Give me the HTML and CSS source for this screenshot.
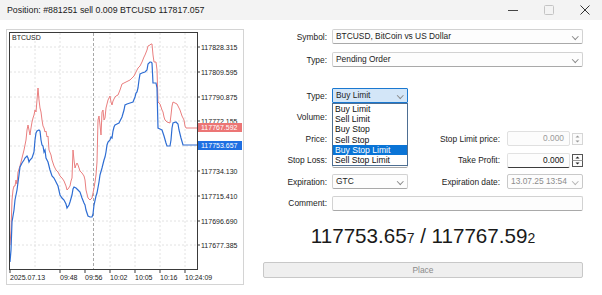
FILE: index.html
```html
<!DOCTYPE html>
<html lang="en">
<head>
  <meta charset="UTF-8" />
  <title>Position</title>
  <link rel="stylesheet" href="styles.css">
</head>
<body>

  <!-- BARRA DE TITULO -->
  <header class="titlebar">
    <span class="title">Position: #881251 sell 0.009 BTCUSD 117817.057</span>
    <div class="controls">
      <svg width="12" height="12" viewBox="0 0 12 12"><line x1="1" y1="6.5" x2="11" y2="6.5" stroke="#444" stroke-width="1"/></svg>
      <svg width="12" height="12" viewBox="0 0 12 12"><rect x="1.5" y="1.5" width="9" height="9" rx="1" fill="none" stroke="#c4c4c4"/></svg>
      <svg width="12" height="12" viewBox="0 0 12 12"><path d="M1.5 1.5 L10.5 10.5 M10.5 1.5 L1.5 10.5" stroke="#333" stroke-width="1"/></svg>
    </div>
  </header>

  <main class="content">

    <!-- GRAFICO -->
    <section class="chart-panel">
      <svg class="chart" width="236" height="254" viewBox="0 0 236 254">
        <g transform="translate(-7 -30)">
          <g class="grid-lines">
            <line x1="10" y1="47" x2="197" y2="47"/>
            <line x1="10" y1="72" x2="197" y2="72"/>
            <line x1="10" y1="97" x2="197" y2="97"/>
            <line x1="10" y1="121" x2="197" y2="121"/>
            <line x1="10" y1="146" x2="197" y2="146"/>
            <line x1="10" y1="171" x2="197" y2="171"/>
            <line x1="10" y1="196" x2="197" y2="196"/>
            <line x1="10" y1="221" x2="197" y2="221"/>
            <line x1="10" y1="245" x2="197" y2="245"/>
            <line x1="35" y1="33" x2="35" y2="269"/>
            <line x1="60" y1="33" x2="60" y2="269"/>
            <line x1="110" y1="33" x2="110" y2="269"/>
            <line x1="135" y1="33" x2="135" y2="269"/>
            <line x1="160" y1="33" x2="160" y2="269"/>
            <line x1="185" y1="33" x2="185" y2="269"/>
          </g>
          <line class="separator" x1="93.5" y1="33" x2="93.5" y2="269"/>

          <polyline class="ask" points="10,245 11,230 12,200 13,190 14,186 15,186 16,180 17,184 18,172 20,166 22,158 24,150 25,145 26,140 27,130 28,125 29,130 30,135 31,128 32,122 33,118 34,115 35,110 36,112 37,100 38,88 39,100 40,108 41,112 42,120 43,126 44,128 45,132 46,131 47,137 48,136 49,150 51,155 52,160 54,166 56,170 58,172 60,176 62,178 64,181 66,186 67,190 68,189 70,186 71,181 72,178 73,150 74,160 75,168 76,165 77,163 78,165 79,168 80,171 82,173 84,176 85,180 86,190 88,198 90,200 92,198 93,193 94,188 95,182 96,175 97,162 98,120 99,116 100,125 101,135 102,112 103,110 104,120 105,118 106,108 107,104 108,100 109,98 110,96 111,102 112,105 113,101 114,99 115,97 116,96 118,95 120,90 122,84 124,83 126,82 128,81 130,80 132,78 134,76 135,74 137,70 138,68 140,66 142,62 144,57 145,55 147,50 148,46 150,45 151,44 152,44 153,55 154,62 156,62 157,70 158,102 160,104 162,110 163,112 164,117 165,120 167,122 170,123 171,115 172,106 173,102 175,103 177,104 178,106 180,110 182,116 184,120 185,126 186,128 197,128"/>
          <polyline class="bid" points="10,262 11,250 12,222 14,210 15,200 17,190 19,175 20,167 22,163 24,160 25,158 27,156 28,158 29,162 30,160 32,158 33,155 34,152 35,140 36,133 37,131 39,130 40,131 41,140 42,145 43,146 44,152 45,150 46,158 48,162 50,170 52,176 54,178 56,182 58,186 60,195 62,198 64,200 66,204 67,208 69,205 70,202 72,195 73,189 74,187 76,188 78,190 80,192 82,198 84,203 85,205 86,210 88,216 90,217 92,217 93,214 94,205 96,196 97,193 99,182 100,175 102,168 104,160 105,157 106,152 107,145 108,142 110,140 111,137 112,138 113,131 114,127 115,125 117,124 119,123 120,121 122,117 124,110 125,105 127,104 130,103 133,102 135,97 136,93 137,92 138,88 139,80 140,74 142,73 145,72 147,70 148,64 150,62 151,62 152,63 153,83 156,83 157,88 158,128 160,129 162,130 164,136 166,143 167,146 170,146 171,140 172,128 173,123 176,122 178,124 179,130 181,138 183,145 197,145"/>

          <rect class="frame" x="9.5" y="32.5" width="188" height="237"/>
          <text class="symbol" x="12" y="40">BTCUSD</text>

          <g class="ticks">
            <line x1="197" y1="47" x2="200" y2="47"/>
            <line x1="197" y1="72" x2="200" y2="72"/>
            <line x1="197" y1="97" x2="200" y2="97"/>
            <line x1="197" y1="121" x2="200" y2="121"/>
            <line x1="197" y1="171" x2="200" y2="171"/>
            <line x1="197" y1="196" x2="200" y2="196"/>
            <line x1="197" y1="221" x2="200" y2="221"/>
            <line x1="197" y1="245" x2="200" y2="245"/>
            <line x1="10" y1="269" x2="10" y2="273"/>
            <line x1="60" y1="269" x2="60" y2="273"/>
            <line x1="85" y1="269" x2="85" y2="273"/>
            <line x1="110" y1="269" x2="110" y2="273"/>
            <line x1="135" y1="269" x2="135" y2="273"/>
            <line x1="160" y1="269" x2="160" y2="273"/>
            <line x1="185" y1="269" x2="185" y2="273"/>
          </g>

          <g class="axis">
            <text x="201" y="49.5">117828.315</text>
            <text x="201" y="74.5">117809.595</text>
            <text x="201" y="99.5">117790.875</text>
            <text x="201" y="123.5">117772.155</text>
            <text x="201" y="173.5">117734.130</text>
            <text x="201" y="198.5">117715.410</text>
            <text x="201" y="223.5">117696.690</text>
            <text x="201" y="247.5">117677.385</text>
            <text x="10" y="280">2025.07.13</text>
            <text x="60" y="280">09:48</text>
            <text x="85" y="280">09:56</text>
            <text x="110" y="280">10:02</text>
            <text x="135" y="280">10:05</text>
            <text x="160" y="280">10:16</text>
            <text x="185" y="280">10:24:09</text>
          </g>

          <rect class="tag-ask" x="198" y="123" width="44" height="9"/>
          <text class="tag-text" x="201" y="130.2">117767.592</text>
          <rect class="tag-bid" x="198" y="141" width="44" height="9"/>
          <text class="tag-text" x="201" y="148.2">117753.657</text>
        </g>
      </svg>
    </section>

    <!-- FORMULARIO -->
    <section class="order-form">
      <div class="form-grid top">
        <label>Symbol:</label>
        <div class="combo wide">BTCUSD, BitCoin vs US Dollar</div>
        <label>Type:</label>
        <div class="combo wide">Pending Order</div>
      </div>

      <div class="form-grid">
        <label>Type:</label>
        <div class="combo active">Buy Limit
          <ul class="dropdown">
            <li>Buy Limit</li>
            <li>Sell Limit</li>
            <li>Buy Stop</li>
            <li>Sell Stop</li>
            <li class="selected">Buy Stop Limit</li>
            <li>Sell Stop Limit</li>
          </ul>
        </div>
        <span></span><span></span>

        <label>Volume:</label>
        <div class="field"></div>
        <span></span><span></span>

        <label>Price:</label>
        <div class="field"></div>
        <label class="right">Stop Limit price:</label>
        <div class="spin-field disabled">
          <div class="field num">0.000</div>
          <svg class="spinner" width="11" height="12" viewBox="0 0 11 12">
            <rect x="0.5" y="0.5" width="10" height="11" fill="#fbfbfb" stroke="#d6d6d6"/>
            <path d="M3.5 4.5 L5.5 2.5 L7.5 4.5 Z M3.5 7.5 L5.5 9.5 L7.5 7.5 Z" fill="#9a9a9a"/>
          </svg>
        </div>

        <label>Stop Loss:</label>
        <div class="field"></div>
        <label class="right">Take Profit:</label>
        <div class="spin-field">
          <div class="field num focus">0.000</div>
          <svg class="spinner" width="11" height="13" viewBox="0 0 11 13">
            <rect x="0.5" y="0.5" width="10" height="12" fill="#fdfdfd" stroke="#555"/>
            <line x1="0.5" y1="6.5" x2="10.5" y2="6.5" stroke="#999"/>
            <path d="M3.5 4.5 L5.5 2.5 L7.5 4.5 Z M3.5 8.5 L5.5 10.5 L7.5 8.5 Z" fill="#222"/>
          </svg>
        </div>

        <label>Expiration:</label>
        <div class="combo">GTC</div>
        <label class="right">Expiration date:</label>
        <div class="combo disabled">13.07.25 13:54</div>

        <label>Comment:</label>
        <div class="field comment"></div>
      </div>

      <div class="quote">117753.65<small>7</small> / 117767.59<small>2</small></div>

      <button class="place">Place</button>
    </section>

  </main>

</body>
</html>
```

FILE: styles.css
```css
body {
  margin: 0;
  width: 602px;
  height: 295px;
  overflow: hidden;
  background: #ffffff;
  font-family: "Liberation Sans", Arial, sans-serif;
  color: #1c1c1c;
}

.titlebar {
  height: 20px;
  background: #f3f3f3;
  display: flex;
  align-items: center;
  justify-content: space-between;
  padding: 0 11px 0 7px;
}

.title {
  font-size: 8.8px;
  color: #1a1a1a;
}

.controls {
  display: flex;
  gap: 24px;
  align-items: center;
}

.content {
  display: flex;
  padding: 9px 0 0 6px;
}

/* grafico */
.chart-panel {
  width: 238px;
  height: 256px;
  box-sizing: border-box;
  border: 1px solid #d4d4d4;
  background: #ffffff;
}

.chart {
  display: block;
}

.grid-lines line {
  stroke: #e2e2e2;
  stroke-width: 1;
  stroke-dasharray: 2 2;
}

.separator {
  stroke: #a8a8a8;
  stroke-width: 1;
  stroke-dasharray: 3 2;
}

.ask {
  fill: none;
  stroke: #ea7f7f;
  stroke-width: 1;
}

.bid {
  fill: none;
  stroke: #2e6dd3;
  stroke-width: 1.2;
}

.frame {
  fill: none;
  stroke: #3a3a3a;
  stroke-width: 1;
}

.ticks line {
  stroke: #3a3a3a;
  stroke-width: 1;
}

.symbol,
.axis text {
  font-family: "Liberation Sans", Arial, sans-serif;
  font-size: 7px;
  fill: #222;
}

.tag-ask {
  fill: #ec7575;
}

.tag-bid {
  fill: #1f6fe2;
}

.tag-text {
  font-family: "Liberation Sans", Arial, sans-serif;
  font-size: 7px;
  fill: #ffffff;
}

/* formulario */
.order-form {
  width: 320px;
  margin-left: 19px;
  font-size: 8.4px;
}

.form-grid {
  display: grid;
  grid-template-columns: 64px 76px 89px 76px;
  grid-auto-rows: 15px;
  column-gap: 5px;
  row-gap: 6.5px;
  align-items: center;
}

.form-grid.top {
  row-gap: 8px;
  margin-bottom: 21px;
}

.form-grid label {
  text-align: right;
  color: #1c1c1c;
}

.form-grid label.right {
  padding-right: 2px;
}

.combo,
.field {
  position: relative;
  height: 15px;
  box-sizing: border-box;
  border: 1px solid #d2d2d2;
  border-bottom-color: #a9a9a9;
  border-radius: 2px;
  background: #fdfdfd;
  line-height: 13px;
  padding-left: 3px;
  white-space: nowrap;
}

.combo::after {
  content: "";
  position: absolute;
  right: 5px;
  top: 3.5px;
  width: 3.5px;
  height: 3.5px;
  border-right: 1px solid #8a8a8a;
  border-bottom: 1px solid #8a8a8a;
  transform: rotate(45deg);
}

.combo.wide,
.field.comment {
  grid-column: 2 / 5;
}

.combo.active {
  border-color: #1a78d0;
  background: #d3e6f8;
  border-radius: 1px;
}

.combo.disabled {
  color: #8c8c8c;
  border-color: #c9c9c9;
}

.combo.disabled::after {
  border-color: #b5b5b5;
}

.dropdown {
  position: absolute;
  top: 14px;
  left: -1px;
  width: 76px;
  box-sizing: border-box;
  margin: 0;
  padding: 0;
  list-style: none;
  background: #ffffff;
  border: 1px solid #4e6f93;
  z-index: 5;
}

.dropdown li {
  height: 10.2px;
  line-height: 10.2px;
  padding-left: 2px;
  font-size: 8.6px;
  color: #111;
}

.dropdown li.selected {
  background: #0a74d6;
  color: #ffffff;
}

.spin-field {
  display: flex;
  align-items: center;
  gap: 2px;
}

.spin-field .field {
  flex: 1;
}

.field.num {
  text-align: right;
  padding-right: 5px;
}

.spin-field.disabled .field {
  color: #9a9a9a;
  border-color: #e0e0e0;
  background: #fcfcfc;
}

.field.focus {
  border-color: #e2e2e2;
  border-bottom: 1px solid #3c3c3c;
  color: #111;
}

.spinner {
  display: block;
}

.quote {
  margin-top: 13px;
  text-align: center;
  font-size: 20.6px;
  line-height: 24px;
  color: #1a1a1a;
}

.quote small {
  font-size: 14px;
}

.place {
  display: block;
  width: 100%;
  height: 16px;
  margin-top: 12.5px;
  padding: 0;
  background: #efefef;
  border: 1px solid #c8c8c8;
  border-radius: 2px;
  font-family: "Liberation Sans", Arial, sans-serif;
  font-size: 8.4px;
  color: #8a8a8a;
}
```
